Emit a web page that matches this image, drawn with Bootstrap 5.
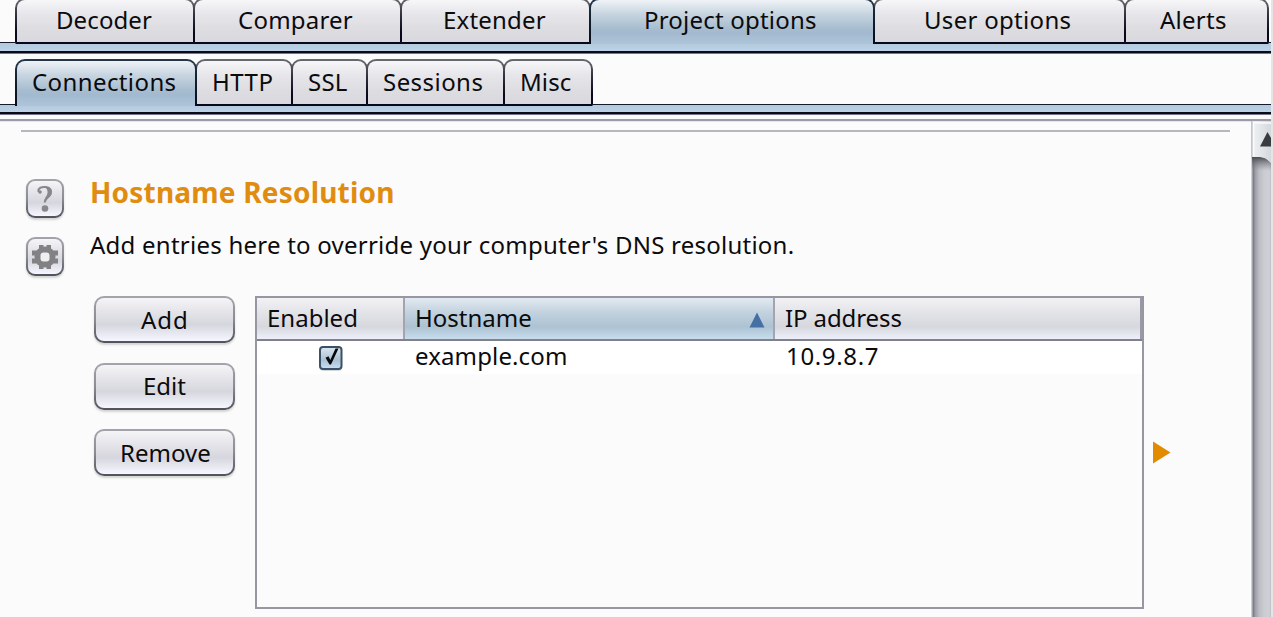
<!DOCTYPE html>
<html lang="en">
<head>
<meta charset="utf-8">
<meta name="viewport" content="width=device-width, initial-scale=1">
<title>Project options – Connections</title>
<link href="https://cdn.jsdelivr.net/npm/bootstrap@5.3.0/dist/css/bootstrap.min.css" rel="stylesheet">
<style>
  body { font-family: "Noto Sans", "Open Sans", sans-serif; font-size: 24px; line-height: 40px; color: #0b0b0d; background: #fbfbfb; height: 617px; }
  .window-edge { width: 2px; background: #e5e5e6; }

  /* tab strips */
  .tabstrip { padding-left: 15px; position: relative; z-index: 1; }
  .tabstrip .nav-item + .nav-item { margin-left: -2px; }
  .tabstrip .nav-item { position: relative; }
  .tabstrip .nav-link {
    color: inherit; padding: 0; white-space: pre; border: 2px solid; border-radius: 10px 10px 0 0;
    position: relative; height: 100%;
    background: linear-gradient(#f7f7f9, #e5e5ea 35%, #dcdce1 70%, #d8d8de) padding-box,
                linear-gradient(#6b6b72, #33343f 35%, #07081b 75%) border-box;
    border-color: transparent transparent #07081b;
  }
  .tabstrip .nav-link.active {
    color: inherit; border-bottom-width: 0; z-index: 2;
    background: linear-gradient(#eff3f7, #c9d6e1 30%, #a6bccf 66%, #a3b9cf 75%, #adc4d9) padding-box,
                linear-gradient(#24394d, #12202f 45%, #050b1b) border-box;
    border-color: transparent;
  }
  .strip-main { height: 46px; margin-top: -2px; }
  .strip-sub { height: 47px; margin-top: 6px; }
  .strip-sub .nav-link { line-height: 41px; }
  .band { height: 11px; margin-top: -2px; border-top: 1px solid #171a2c; border-bottom: 2px solid #090b1b; background: linear-gradient(#b3c9dc, #bdd2e7); box-shadow: 0 1px 0 #75768a; }
  .strip-sub + .band { height: 10px; margin-bottom: 1px; }

  /* panel */
  .panel { margin-top: 4px; border-top: 2px solid #9a9ba6; min-height: 0; box-shadow: inset 0 1px 0 #e6e6ea; }
  .pane-rule { height: 2px; margin: 9px 21px 0; background: #b5b6be; }
  .settings { padding-left: 26px; }
  .metal { border: 2px solid transparent; color: inherit;
    background: linear-gradient(#f5f5f8, #e4e4e9 32%, #d6d7de 62%, #f5f6ff) padding-box,
                linear-gradient(#a4a5ab, #8c8d94 50%, #50515a) border-box;
    box-shadow: 0 2px 2px rgba(70,80,70,.22); }
  .metal-square { width: 38px; height: 39px; border-radius: 9px; padding: 0; }
  .metal-square svg { display: block; margin: 0 auto; }
  .metal-btn { width: 141px; height: 47px; border-radius: 10px; font-size: 24px; line-height: 42px; padding: 0; text-align: left; white-space: pre; }
  .heading { color: #e08c10; font-size: 28px; font-weight: 700; line-height: 38px; letter-spacing: .2px; }
  .description { line-height: 40px; letter-spacing: .24px; }

  /* hosts table */
  .hosts { width: 889px; height: 313px; border: 2px solid #9697a3; }
  .hosts-head { display: grid; grid-template-columns: 148px 370px 1fr; height: 43px; line-height: 39px; border-bottom: 2px solid #80818b;
    background: linear-gradient(#f2f2f5, #e3e4e8 35%, #d7d8de 70%, #edf0fb); }
  .hosts-head > div { border-right: 2px solid #a3a4ad; }
  .hosts-head > div:last-child { border-right: 2px solid #9899a5; }
  .hosts-head .sorted { background: linear-gradient(#e2eaf1, #c3d2df 35%, #adc2d2 70%, #c7dcec); }
  .hosts-row { display: grid; grid-template-columns: 146px 371px 1fr; height: 33px; line-height: 30px; background: #fff; }
  .cell-pad { padding-left: 12px; }
  .expander { margin: 145px 0 0 9px; }

  /* scroll bar */
  .scroll { width: 20px; background: linear-gradient(90deg, #d0d1d5 0 1px, #73757f 2px, #9a9ba3 4px, #bcbcc4 8px, #cbcbd2 13px, #cfcfd6 18px, #c0c0c7); }
  .scroll svg { display: block; }
</style>
</head>
<body class="overflow-hidden">
<div class="d-flex h-100">
  <div class="d-flex flex-column flex-grow-1">
    <ul class="nav flex-nowrap tabstrip strip-main">
      <li class="nav-item" style="width:180px"><a class="nav-link" style="padding-left:39px;letter-spacing:.1px">Decoder</a></li>
      <li class="nav-item" style="width:209px"><a class="nav-link" style="padding-left:43px;letter-spacing:.22px">Comparer</a></li>
      <li class="nav-item" style="width:191px"><a class="nav-link" style="padding-left:41px;letter-spacing:.2px">Extender</a></li>
      <li class="nav-item" style="width:286px"><a class="nav-link active" style="padding-left:53px;letter-spacing:.2px">Project options</a></li>
      <li class="nav-item" style="width:253px"><a class="nav-link" style="padding-left:49px;letter-spacing:.3px">User options</a></li>
      <li class="nav-item" style="width:145px"><a class="nav-link" style="padding-left:34px;letter-spacing:.25px">Alerts</a></li>
    </ul>
    <div class="band"></div>

    <ul class="nav flex-nowrap tabstrip strip-sub">
      <li class="nav-item" style="width:182px"><a class="nav-link active" style="padding-left:15px;letter-spacing:.4px">Connections</a></li>
      <li class="nav-item" style="width:98px"><a class="nav-link" style="padding-left:15px;letter-spacing:.5px">HTTP</a></li>
      <li class="nav-item" style="width:77px"><a class="nav-link" style="padding-left:15px;letter-spacing:.2px">SSL</a></li>
      <li class="nav-item" style="width:139px"><a class="nav-link" style="padding-left:15px;letter-spacing:.45px">Sessions</a></li>
      <li class="nav-item" style="width:90px"><a class="nav-link" style="padding-left:15px;letter-spacing:.1px">Misc</a></li>
    </ul>
    <div class="band"></div>

    <div class="panel d-flex flex-grow-1">
      <div class="flex-grow-1">
        <div class="pane-rule"></div>
        <div class="settings d-flex">
          <div class="d-flex flex-column" style="padding-top:47px;gap:19px">
            <button class="metal metal-square" aria-label="Help">
              <svg width="24" height="32" viewBox="0 0 24 32"><path d="M5.500 9V6.500C7.500 3 17.800 2.600 18 9c0 5-6.300 5.300-6.300 10.500" fill="none" stroke="#88888c" stroke-width="2"/><path d="M12 3.500c9 .2 8.500 9.500 2.500 12l-3 4c-.8-5 3.500-6.500 3-11C14.300 5.800 13 5 12 4.500z" fill="#88888c"/><circle cx="7" cy="9" r="1.800" fill="#88888c"/><circle cx="12" cy="25.500" r="3.300" fill="#88888c"/></svg>
            </button>
            <button class="metal metal-square" aria-label="Settings">
              <svg width="28" height="28" viewBox="0 0 28 28"><g fill="#828285"><circle cx="14" cy="14" r="10.500"/><path d="M8 2h4.500v4H8zM15.500 2H20v4h-4.500zM8 22h4.500v4H8zM15.500 22H20v4h-4.500zM1 7.500h5v5H1zM1 15.500h5v5H1zM22 7.500h5v5h-5zM22 15.500h5v5h-5z"/></g><rect x="9.500" y="9.500" width="9" height="9" rx="3" fill="#efeff2"/></svg>
            </button>
          </div>
          <div style="padding-left:26px">
            <div class="heading" style="padding-top:41px">Hostname Resolution</div>
            <div class="description" style="margin-top:14px">Add entries here to override your computer's DNS resolution.</div>
            <div class="d-flex align-items-start" style="margin:31px 0 0 4px">
              <div class="d-flex flex-column" style="gap:19.500px">
                <button class="metal metal-btn" style="padding-left:45px;letter-spacing:.9px">Add</button>
                <button class="metal metal-btn" style="padding-left:47px">Edit</button>
                <button class="metal metal-btn" style="padding-left:24px">Remove</button>
              </div>
              <div class="hosts" style="margin-left:20px">
                <div class="hosts-head">
                  <div style="padding-left:10px">Enabled</div>
                  <div class="sorted d-flex justify-content-between"><span style="padding-left:10px">Hostname</span><svg width="16" height="16" viewBox="0 0 16 16" style="margin:14px 8px 0 0"><path d="M8 .5 15.500 15.500H.5z" fill="#4470a6"/></svg></div>
                  <div style="padding-left:10px;letter-spacing:-.1px">IP address</div>
                </div>
                <div class="hosts-row">
                  <div><svg class="d-block" width="25" height="27" viewBox="0 0 25 27" style="margin:4px 0 0 61px"><defs><linearGradient id="chk" x1="0" y1="0" x2="0" y2="1"><stop offset="0" stop-color="#dce6ef"/><stop offset=".6" stop-color="#abc1d4"/><stop offset="1" stop-color="#c9dff2"/></linearGradient></defs><rect x="2" y="3" width="22" height="23" rx="4" fill="#b5bec4" opacity=".6"/><rect x="2" y="2" width="21.500" height="22" rx="3" fill="url(#chk)" stroke="#3b5167" stroke-width="2"/><path d="M7.500 12.800 10.500 11.300 12.300 15 17.500 3.500H20.500L13 19.500H11.500z" fill="#08090c"/></svg></div>
                  <div class="cell-pad" style="letter-spacing:.13px">example.com</div>
                  <div class="cell-pad" style="letter-spacing:.65px">10.9.8.7</div>
                </div>
              </div>
              <svg class="expander" width="18" height="23" viewBox="0 0 18 23"><path d="M0 .5 17.500 11.500 0 22.500z" fill="#e28a00"/></svg>
            </div>
          </div>
        </div>
      </div>
      <div class="scroll">
        <svg width="20" height="50" viewBox="0 0 20 50"><defs><linearGradient id="btn" x1="0" x2="1"><stop offset="0" stop-color="#f0f3f4"/><stop offset="1" stop-color="#d3d9dc"/></linearGradient><linearGradient id="shade" x1="0" y1="0" x2="0" y2="1"><stop offset="0" stop-color="#4b4c52"/><stop offset="1" stop-color="#85868e" stop-opacity="0"/></linearGradient></defs><path d="M1 36H9Q15 36 20 42V50H1Z" fill="url(#shade)"/><path d="M1 0H20V42Q15 36 9 36H1z" fill="url(#btn)"/><path d="M2.500 35V2H20" fill="none" stroke="#fbfbfb" stroke-width="1.500"/><path d="M1 0V36" stroke="#b8babf"/><path d="M9 25.500 16.500 11 20 17V25.500z" fill="#3a3d40"/></svg>
      </div>
    </div>
  </div>
  <div class="window-edge"></div>
</div>
<script src="https://cdn.jsdelivr.net/npm/bootstrap@5.3.0/dist/js/bootstrap.bundle.min.js"></script>
</body>
</html>
